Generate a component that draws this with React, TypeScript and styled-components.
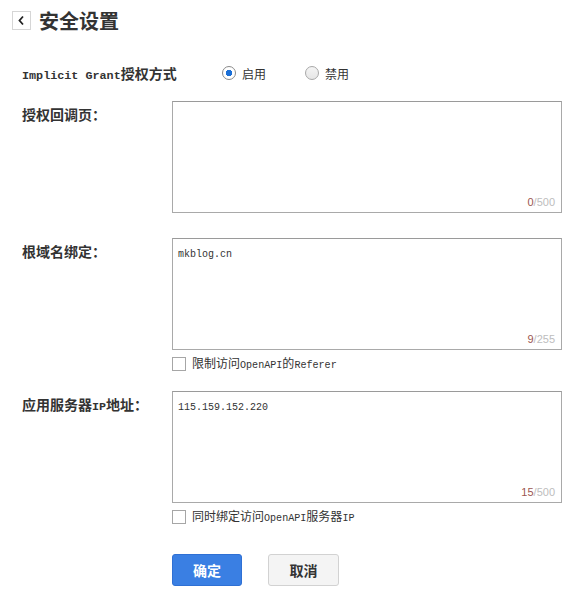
import React from "react";
import styled, { createGlobalStyle } from "styled-components";

const GlobalStyle = createGlobalStyle`
  html, body { margin: 0; padding: 0; background: #ffffff; }
  body {
    font-family: "Noto Sans CJK SC", "Liberation Sans", sans-serif;
    color: #333333;
  }
  * { box-sizing: border-box; }
`;

const Page = styled.div`
  width: 573px;
  min-height: 594px;
  background: #fff;
`;

const Header = styled.div`
  display: flex;
  align-items: center;
  height: 41px;
  padding-left: 12px;
  gap: 8px;
`;

const BackButton = styled.button`
  width: 19px;
  height: 19px;
  padding: 0;
  border: 1px solid #d6d6d6;
  background: #fff;
  display: flex;
  align-items: center;
  justify-content: center;
  cursor: pointer;
`;

const Title = styled.h1`
  margin: 0;
  font-size: 20px;
  font-weight: 700;
  color: #333;
  line-height: 24px;
`;

const Form = styled.div`
  display: flex;
  flex-direction: column;
  padding-left: 22px;
`;

const Latin = styled.span`
  font-family: "Liberation Mono", monospace;
  font-size: 0.84em;
  line-height: 1;
`;

const RadioRow = styled.div`
  display: flex;
  align-items: center;
  height: 20px;
  margin-top: 22px;
`;

const RowLabel = styled.div<{ $width: number }>`
  width: ${(p) => p.$width}px;
  flex: none;
  font-size: 14px;
  font-weight: 700;
  color: #333;
  line-height: 20px;
`;

const RadioOption = styled.label`
  display: flex;
  align-items: center;
  gap: 6px;
  width: 83px;
  font-size: 12px;
  color: #333;
  cursor: pointer;
`;

const RadioCircle = styled.span<{ $checked: boolean }>`
  width: 14px;
  height: 14px;
  border-radius: 50%;
  border: 1px solid ${(p) => (p.$checked ? "#8a8a8a" : "#a8a8a8")};
  background: ${(p) =>
    p.$checked
      ? "radial-gradient(circle, #1b6fd6 0, #1b6fd6 3px, #ffffff 3.5px)"
      : "linear-gradient(#f4f4f4, #e6e6e6)"};
  flex: none;
`;

const FieldRow = styled.div<{ $top: number }>`
  display: grid;
  grid-template-columns: 150px 390px;
  margin-top: ${(p) => p.$top}px;
`;

const FieldLabel = styled.div`
  font-size: 14px;
  font-weight: 700;
  color: #333;
  line-height: 20px;
  height: 20px;
  margin-top: 3px;
`;

const FieldBody = styled.div`
  display: flex;
  flex-direction: column;
`;

const AreaWrap = styled.div`
  position: relative;
  width: 390px;
  height: 112px;
`;

const Area = styled.textarea`
  width: 100%;
  height: 100%;
  resize: none;
  border: 1px solid #a9a9a9;
  border-top-color: #9a9a9a;
  padding: 8px 5px;
  font-family: "Liberation Mono", monospace;
  font-size: 10px;
  line-height: 16px;
  color: #333;
  outline: none;
  display: block;
`;

const Counter = styled.span`
  position: absolute;
  right: 7px;
  bottom: 4px;
  font-family: "Liberation Sans", sans-serif;
  font-size: 11px;
  color: #bdbdbd;
  line-height: 14px;
`;

const CounterNum = styled.span`
  color: #9b5650;
`;

const CheckRow = styled.label`
  display: flex;
  align-items: center;
  gap: 6px;
  height: 14px;
  margin-top: 7px;
  font-size: 12px;
  color: #333;
  line-height: 14px;
  cursor: pointer;
`;

const CheckBox = styled.span`
  width: 14px;
  height: 14px;
  border: 1px solid #a6a6a6;
  background: #fff;
  flex: none;
`;

const ButtonRow = styled.div`
  display: flex;
  gap: 26px;
  margin-top: 30px;
  margin-left: 150px;
`;

const Button = styled.button<{ $primary?: boolean }>`
  width: ${(p) => (p.$primary ? 70 : 71)}px;
  height: 32px;
  border-radius: 3px;
  border: 1px solid ${(p) => (p.$primary ? "#2f70d4" : "#d2d2d2")};
  background: ${(p) => (p.$primary ? "#3a7fe3" : "#f4f4f4")};
  color: ${(p) => (p.$primary ? "#ffffff" : "#333333")};
  font-family: "Noto Sans CJK SC", sans-serif;
  font-size: 14px;
  font-weight: 700;
  cursor: pointer;
  padding: 0;
`;

type FieldProps = {
  label: React.ReactNode;
  value: string;
  max: number;
  top: number;
  check?: React.ReactNode;
};

function Field({ label, value, max, top, check }: FieldProps) {
  return (
    <FieldRow $top={top}>
      <FieldLabel>{label}</FieldLabel>
      <FieldBody>
        <AreaWrap>
          <Area defaultValue={value} />
          <Counter>
            <CounterNum>{value.length}</CounterNum>/{max}
          </Counter>
        </AreaWrap>
        {check && (
          <CheckRow>
            <CheckBox />
            <span>{check}</span>
          </CheckRow>
        )}
      </FieldBody>
    </FieldRow>
  );
}

export default function App() {
  return (
    <Page>
      <GlobalStyle />
      <Header>
        <BackButton aria-label="返回">
          <svg width="9" height="11" viewBox="0 0 9 11">
            <path d="M6 1.5 L2.5 5.5 L6 9.5" fill="none" stroke="#222" strokeWidth="1.8" />
          </svg>
        </BackButton>
        <Title>安全设置</Title>
      </Header>
      <Form>
        <RadioRow>
          <RowLabel $width={200}>
            <Latin>Implicit Grant</Latin>授权方式
          </RowLabel>
          <RadioOption>
            <RadioCircle $checked />
            启用
          </RadioOption>
          <RadioOption>
            <RadioCircle $checked={false} />
            禁用
          </RadioOption>
        </RadioRow>
        <Field label="授权回调页：" value="" max={500} top={18} />
        <Field
          label="根域名绑定："
          value="mkblog.cn"
          max={255}
          top={25}
          check={
            <>
              限制访问<Latin>OpenAPI</Latin>的<Latin>Referer</Latin>
            </>
          }
        />
        <Field
          label={
            <>
              应用服务器<Latin>IP</Latin>地址：
            </>
          }
          value="115.159.152.220"
          max={500}
          top={20}
          check={
            <>
              同时绑定访问<Latin>OpenAPI</Latin>服务器<Latin>IP</Latin>
            </>
          }
        />
        <ButtonRow>
          <Button $primary>确定</Button>
          <Button>取消</Button>
        </ButtonRow>
      </Form>
    </Page>
  );
}
